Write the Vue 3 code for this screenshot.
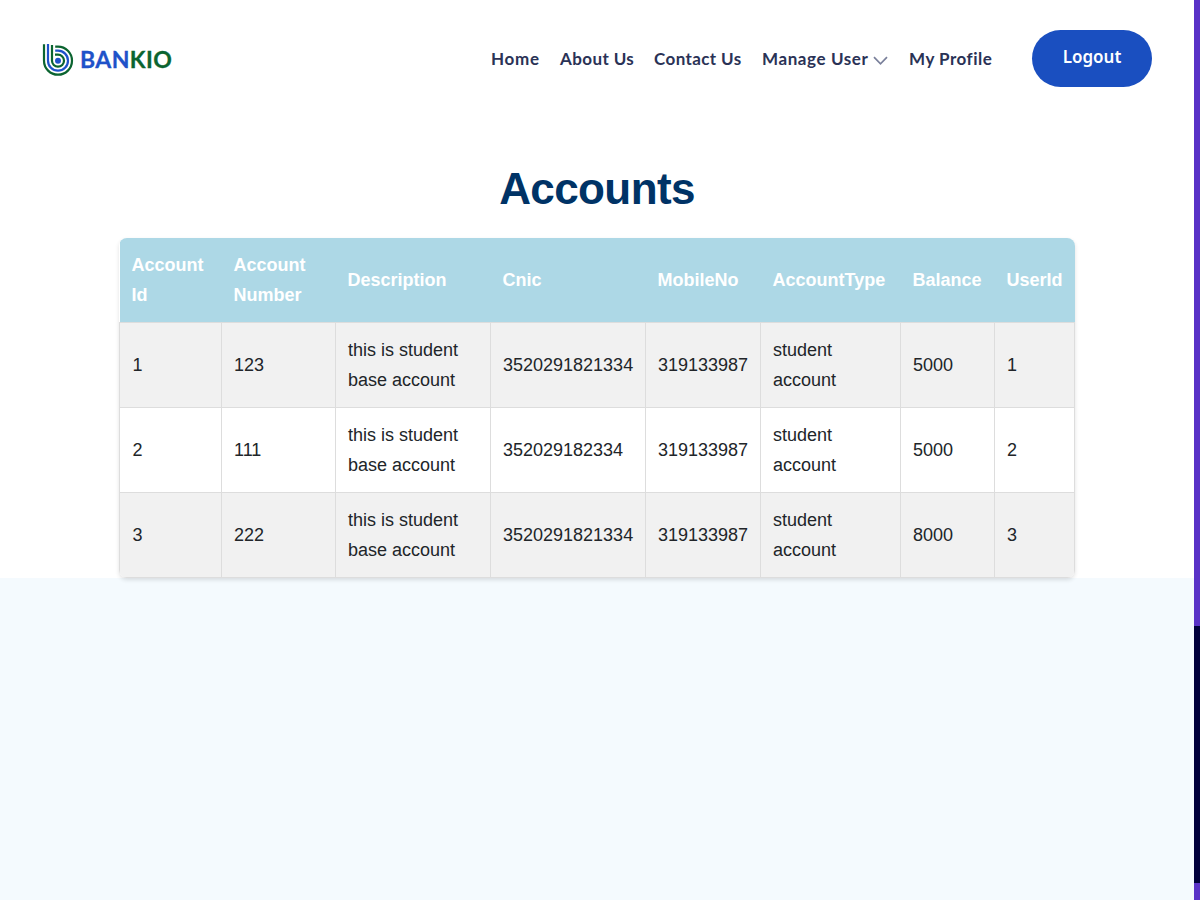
<script setup>
const links = [
  { text: 'Home', cls: 'home' },
  { text: 'About Us', cls: 'about' },
  { text: 'Contact Us', cls: 'contact' },
  { text: 'Manage User', cls: 'manage', menu: true },
  { text: 'My Profile', cls: 'profile' },
]
const heads = ['Account Id', 'Account Number', 'Description', 'Cnic', 'MobileNo', 'AccountType', 'Balance', 'UserId']
const description = 'this is student base account'
const rows = [
  ['1', '123', description, '3520291821334', '319133987', 'student account', '5000', '1'],
  ['2', '111', description, '352029182334', '319133987', 'student account', '5000', '2'],
  ['3', '222', description, '3520291821334', '319133987', 'student account', '8000', '3'],
]
</script>

<template>
  <div class="page">
    <main class="content">
      <header class="header">
        <div class="logo">
          <svg class="mark" width="32" height="34" viewBox="0 0 32 34" fill="none" stroke-width="2.2">
            <path d="M2 1.2V17.7A14 14 0 1 0 16 3.7H13.2" stroke="#0b6430" />
            <path d="M6 1V17.7A10 10 0 1 0 16 7.7H13.2" stroke="#1f52c9" />
            <path d="M10 2V17.7A6 6 0 1 0 16 11.7H13" stroke="#0b6430" />
            <circle cx="16" cy="17.7" r="3" fill="#1f52c9" />
          </svg>
          <span class="brand"><span class="blue">BAN</span><span class="green">KIO</span></span>
        </div>
        <nav class="nav">
          <a v-for="l in links" :key="l.text" class="link" :class="l.cls">
            <span>{{ l.text }}</span>
            <svg v-if="l.menu" class="chevron" width="15" height="10" viewBox="0 0 15 10" fill="none" stroke="#7a809b" stroke-width="1.7">
              <path d="M1 1.2L7.5 7.8L14 1.2" />
            </svg>
          </a>
        </nav>
        <button class="logout">Logout</button>
      </header>
      <h1 class="title">Accounts</h1>
      <div class="table-wrap">
        <table class="table">
          <colgroup>
            <col v-for="n in 8" :key="n" :class="'c' + n" />
          </colgroup>
          <thead>
            <tr><th v-for="h in heads" :key="h">{{ h }}</th></tr>
          </thead>
          <tbody>
            <tr v-for="r in rows" :key="r[0]">
              <td v-for="(c, i) in r" :key="i">{{ c }}</td>
            </tr>
          </tbody>
        </table>
      </div>
    </main>
    <aside class="scrollbar"><div class="thumb"></div></aside>
  </div>
</template>

<style>
body { margin: 0; overflow: hidden; background: #f4fafe; }
</style>

<style scoped>
.page {
  display: flex;
  height: 900px;
  background: #f4fafe;
  font-family: "Liberation Sans", Arial, sans-serif;
}
.content {
  width: 1194px;
  height: 578px;
  background: #fff;
}
.scrollbar {
  width: 6px;
  height: 900px;
  background: #5932c7;
  box-sizing: border-box;
  padding-top: 626px;
}
.thumb { height: 257px; background: #00003c; }
.header {
  display: flex;
  align-items: center;
  height: 117px;
  box-sizing: border-box;
  padding: 0 42px;
}
.logo {
  display: flex;
  align-items: center;
  width: 448px;
  height: 34px;
}
.mark { flex: none; margin-top: 2px; }
.brand {
  margin-left: 6px;
  margin-top: 1px;
  font: 700 23px/34px Lato, sans-serif;
  letter-spacing: 0.4px;
  -webkit-text-stroke: 0.3px;
}
.blue { color: #1f52c9; }
.green { color: #0b6430; }
.nav {
  display: flex;
  gap: 20px;
  width: 542px;
  flex: none;
}
.link {
  display: flex;
  align-items: center;
  flex: none;
  white-space: nowrap;
  color: #2a3256;
  font: 700 17px/30px Lato, sans-serif;
  letter-spacing: 0.5px;
}
.home { width: 49px; padding-left: 1px; letter-spacing: 0.7px; }
.about { width: 74px; letter-spacing: 0.4px; }
.contact { width: 88px; letter-spacing: 0.4px; }
.manage { width: 126px; padding-right: 1px; letter-spacing: 0.6px; }
.profile { width: 84px; }
.chevron { margin-left: auto; margin-top: 4px; flex: none; }
.logout {
  flex: none;
  width: 120px;
  height: 57px;
  padding: 0 0 4px;
  border: 0;
  border-radius: 30px;
  background: #1a4fc0;
  color: #fff;
  font: 600 17px/30px "Noto Sans", sans-serif;
}
.title {
  margin: 0;
  padding-top: 43px;
  height: 78px;
  color: #036;
  font-size: 44px;
  line-height: 58px;
  letter-spacing: -0.6px;
  text-align: center;
}
.table-wrap {
  width: 956px;
  margin-left: 119px;
}
.table {
  width: 956px;
  table-layout: fixed;
  border-collapse: collapse;
  border-radius: 8px;
  overflow: hidden;
  box-shadow: 0 2px 4px rgba(0, 0, 0, 0.12);
  font-size: 18px;
  line-height: 30px;
}
.c1 { width: 102px; }
.c2 { width: 114px; }
.c3 { width: 155px; }
.c4 { width: 155px; }
.c5 { width: 115px; }
.c6 { width: 140px; }
.c7 { width: 94px; }
.c8 { width: 80px; }
th, td { padding: 12px; text-align: left; vertical-align: middle; }
td:first-child { padding-left: 12.5px; }
th { background: #add8e6; color: #fff; font-weight: 700; }
td { border: 1px solid #ddd; color: #212529; }
tbody tr:nth-child(odd) { background: #f1f1f1; }
</style>
